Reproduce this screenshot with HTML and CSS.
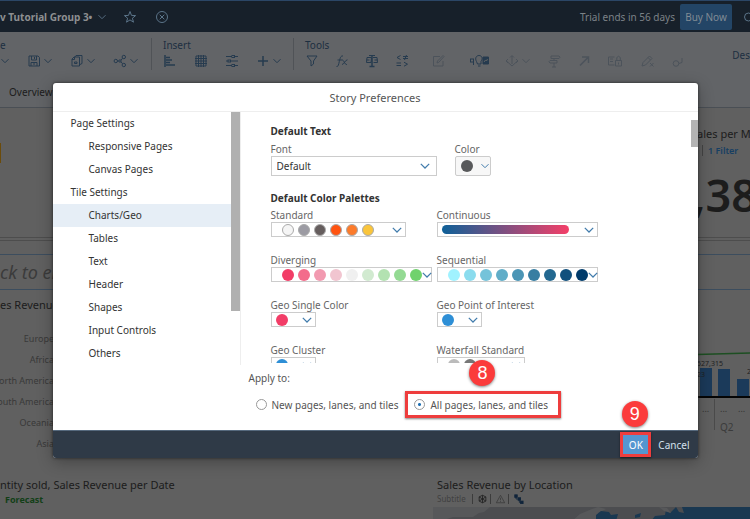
FILE: index.html
```html
<!DOCTYPE html>
<html lang="en">
<head>
<meta charset="utf-8">
<title>Story Preferences</title>
<link rel="stylesheet" href="styles.css">
</head>
<body>
<svg class="defs" aria-hidden="true">
  <symbol id="caret" viewBox="0 0 10 10"><path d="M1.500 3.200 5 6.700 8.500 3.200"/></symbol>
</svg>
<div class="app">
  <header class="shell">
    <strong class="story-name">v Tutorial Group 3•</strong>
    <svg class="caret" viewBox="0 0 10 10"><use href="#caret"/></svg>
    <svg class="icon star" viewBox="0 0 14 14"><path d="M7 1.500 8.500 5.400 12.600 5.600 9.400 8.200 10.500 12.200 7 9.900 3.500 12.200 4.600 8.200 1.400 5.600 5.500 5.400Z"/></svg>
    <svg class="icon" viewBox="0 0 14 14"><circle cx="7" cy="7" r="5.500"/><path d="M4.700 4.700 9.300 9.300M9.300 4.700 4.700 9.300"/></svg>
    <span class="trial">Trial ends in 56 days</span>
    <button class="buy">Buy Now</button>
    <svg class="search" viewBox="0 0 7 14"><circle cx="5.500" cy="7" r="4"/></svg>
  </header>

  <div class="toolbar">
    <section class="group">
      <h2>e</h2>
      <div class="tools">
        <svg class="caret" viewBox="0 0 10 10"><use href="#caret"/></svg>
        <span class="tool">
          <svg class="icon" viewBox="0 0 14 14"><path d="M2 2h9l1.500 1.500V12H2ZM4.500 2v4h5V2M4 12V8.500h6V12M7.500 3v2M6 10h2"/></svg>
          <svg class="caret" viewBox="0 0 10 10"><use href="#caret"/></svg>
        </span>
        <span class="tool">
          <svg class="icon" viewBox="0 0 14 14"><path d="M4.500 3.500 6 1.500h6v8l-2 1M2 5l2-2h5.500v9H2ZM2 5.500h2.500V3M4.500 9.500V8h2.500v1.500Z"/></svg>
          <svg class="caret" viewBox="0 0 10 10"><use href="#caret"/></svg>
        </span>
        <span class="tool">
          <svg class="icon" viewBox="0 0 14 14"><circle cx="2.800" cy="7" r="1.700"/><circle cx="7" cy="7" r="1.200"/><circle cx="10.800" cy="3" r="1.700"/><circle cx="10.800" cy="11" r="1.700"/><path d="M4.500 7h1.300M8 6.200l1.500-1.900M8 7.800l1.500 1.900"/></svg>
          <svg class="caret" viewBox="0 0 10 10"><use href="#caret"/></svg>
        </span>
      </div>
    </section>
    <section class="group">
      <h2>Insert</h2>
      <div class="tools">
        <svg class="icon solid" viewBox="0 0 14 14"><path d="M2 1v12M3 3.500h4M3 6h6M3 8.500h4M3 11h9"/></svg>
        <svg class="icon" viewBox="0 0 14 14"><path d="M2 2h10v10H2ZM1 4.500h12M1 7h12M1 9.500h12M4.500 1v12M7 1v12M9.500 1v12"/></svg>
        <svg class="icon" viewBox="0 0 14 14"><path d="M1 2.500h6M10 2.500h3M1 7h2M6 7h7M1 11.500h6M10 11.500h3"/><rect x="7" y="1.500" width="2.500" height="2"/><rect x="3" y="6" width="2.500" height="2"/><rect x="7" y="10.500" width="2.500" height="2"/></svg>
        <span class="tool">
          <svg class="icon solid" viewBox="0 0 14 14"><path d="M7 2v10M2 7h10"/></svg>
          <svg class="caret" viewBox="0 0 10 10"><use href="#caret"/></svg>
        </span>
      </div>
    </section>
    <section class="group grow">
      <h2>Tools</h2>
      <div class="tools compact">
        <svg class="icon" viewBox="0 0 14 14"><path d="M2 2h10L8.500 7v3L6 12V7Z"/></svg>
        <svg class="icon" viewBox="0 0 14 14"><path d="M1.500 12.500c2 .3 2-2 2.800-5S5.500 1.500 8 2M2.500 6h4.500M7 6c2-.5 2.500 5 5 4.500M12.500 5.800C10.500 5.500 9 10.500 7 10.500"/></svg>
        <svg class="icon" viewBox="0 0 14 14"><path class="bold" d="M7 1v11M4.500 12.500h5"/><path d="M2 3.500h4.500L6 8.500H1.500ZM8 3.500h4l.5 5H8.500M4 1.500h6M1.500 6h3M9.500 6h3"/></svg>
        <svg class="icon" viewBox="0 0 14 14"><path d="M5.500 1.500 2 3.500 5.500 5.500M8 2.500h5M8 4.500h5M11.500 1 9.500 6M1.500 9h4.500M1.500 11.500h4.500M9 8.200l3.500 2L9 12.200"/></svg>
        <svg class="icon roomy faint" viewBox="0 0 28 14"><path d="M15 2.500H8.500v9.500H18V7M12 9l.5-2L18 1.500 19 2.500 13.800 8.300Z"/></svg>
        <svg class="icon wide" viewBox="0 0 20 14"><path d="M7.500 7.500C5.500 4 7.500 1.500 10 1.500S14.500 4 12 7.500V10H8.500ZM9 12h2.500"/><rect x="1.500" y="5" width="3" height="3"/><path d="M4.500 8v3"/><path class="fill" d="M14 3h5.500v7H14Z"/><path class="cut" d="M15 8l1.500-2 1 1 1-2"/></svg>
        <span class="tool faint">
          <svg class="icon" viewBox="0 0 14 14"><path d="M5 3.500 7 1.500 9 3.500M7 2v8M3 5 1 7l2 2M11 5l2 2-2 2M1.500 7 7 12 12.500 7"/></svg>
          <svg class="caret" viewBox="0 0 10 10"><use href="#caret"/></svg>
        </span>
        <svg class="icon faint" viewBox="0 0 14 14"><path d="M4 2h8l1 1.200L12 4.500H4ZM10 6.500H3L2 7.700 3 9h7ZM7 4.500v2M7 9v4M5 13h4"/></svg>
        <svg class="icon faint solid" viewBox="0 0 14 14"><path d="M3 11.500 11 3.500M5 3h6.500v6"/></svg>
        <svg class="icon mid faint" viewBox="0 0 16 14"><path d="M7.500 3H1.500v8h6M3 5h3M3 7.500h3M8.500 6.500h6V12h-6ZM9.800 6.500V3.500q1.800-2.500 3.500 0v3M11.500 8.500v2"/></svg>
        <svg class="icon mid faint" viewBox="0 0 16 14"><path d="M3 12l1-3.500L10.500 2l2.500 2.500L6.500 11ZM9 3.500 11.500 6M11 9l3.500 3.500M14.500 9 11 12.500"/></svg>
        <svg class="icon faint" viewBox="0 0 14 14"><circle cx="5" cy="9.500" r="2.800"/><path d="M7.800 9.500 11 8.500V4"/></svg>
      </div>
    </section>
    <span class="mode">Des</span>
  </div>

  <nav class="tabs"><a href="#overview">Overview</a></nav>

  <main>
    <section class="row kpis">
      <i class="marker"></i>
      <article class="kpi">
        <h3>Sales per M</h3>
        <p class="filter"><a href="#filter">1 Filter</a></p>
        <p class="value">,38</p>
      </article>
    </section>
    <section class="row note">
      <input type="text" aria-label="Text" placeholder="ck to enter text">
    </section>
    <section class="row charts">
      <article class="regions">
        <h3>es Revenue</h3>
        <ul>
          <li>Europe</li><li>Africa</li><li>North America</li><li>South America</li><li>Oceania</li><li>Asia</li>
        </ul>
      </article>
      <svg class="forecast" viewBox="0 0 53 110">
        <path class="target" d="M0 13.500 53 12"/>
        <g class="bars"><rect x="3" y="27" width="12" height="28"/><rect x="21" y="28" width="12" height="27"/><rect x="40" y="38" width="12" height="17"/></g>
        <path class="base" d="M0 56h53"/><path class="split" d="M17.500 58v31"/>
        <text x="0" y="25">527,315</text><text x="0" y="36">23</text><text x="50" y="33">2</text>
        <text class="muted" x="5" y="71">...</text><text class="muted" x="23" y="71">...</text><text class="muted" x="41" y="71">...</text>
        <text class="quarter" x="23" y="90">Q2</text>
      </svg>
    </section>
    <section class="row lower">
      <article>
        <h3>ntity sold, Sales Revenue per Date</h3>
        <p class="legend">Forecast</p>
      </article>
      <article class="location">
        <h3>Sales Revenue by Location</h3>
        <p class="meta"><span>Subtitle</span>
          <svg class="mini" viewBox="0 0 12 12"><path d="M6 1.500 10 3.500v5L6 10.500 2 8.500v-5ZM2 3.500l8 5M10 3.500l-8 5M6 1.500v9"/></svg>
          <svg class="mini soft" viewBox="0 0 12 12"><path d="M6 1.500 11 10.500H1ZM6 4.500v3M6 8.500v1"/></svg>
          <svg class="mini links" viewBox="0 0 12 12"><path d="M3 3v3h4v4h3"/><rect x="1.500" y="1" width="3" height="3"/><rect x="5.500" y="4.500" width="3" height="3"/><rect x="8.500" y="8.500" width="3" height="3"/></svg>
        </p>
        <svg class="map" viewBox="0 0 317 14" preserveAspectRatio="none"><path class="land" d="M0 0h317v14H0Z"/><path class="ice" d="M0 0h57l-6 5-5 1-6 4H20L8 14H0ZM139 14l8-7 12-5 6-2 8 2-8 4 1 8Z"/><path class="sea" d="M163 14v-6l5-4 8 1 2 3 7-1-2 7ZM202 8l6-2-1 4-5 1ZM218 14l4-5 10-1 1-6 4 4 6-6 3 5 5 1-2-6h68v14Z"/><path class="ice" d="M226 0l8 1 4 5-7-2Z"/></svg>
      </article>
    </section>
  </main>
</div>

<div class="overlay">
  <form class="dialog" role="dialog" aria-labelledby="dialog-title">
    <h1 id="dialog-title">Story Preferences</h1>
    <div class="body">
      <nav class="side" aria-label="Settings">
        <ul>
          <li class="top">Page Settings</li>
          <li><a href="#responsive">Responsive Pages</a></li>
          <li><a href="#canvas">Canvas Pages</a></li>
          <li class="top">Tile Settings</li>
          <li class="current"><a href="#charts" aria-current="page">Charts/Geo</a></li>
          <li><a href="#tables">Tables</a></li>
          <li><a href="#text">Text</a></li>
          <li><a href="#header">Header</a></li>
          <li><a href="#shapes">Shapes</a></li>
          <li><a href="#inputs">Input Controls</a></li>
          <li><a href="#others">Others</a></li>
        </ul>
        <i class="side-thumb"></i>
      </nav>
      <div class="pane">
        <div class="fields">
          <h2>Default Text</h2>
          <div class="text-row">
            <div class="field">
              <label for="font">Font</label>
              <span class="select"><select id="font"><option>Default</option></select><svg class="caret" viewBox="0 0 10 10"><use href="#caret"/></svg></span>
            </div>
            <div class="field">
              <label for="color">Color</label>
              <button type="button" id="color" class="swatch"><i class="dot c-text"></i><svg class="caret" viewBox="0 0 10 10"><use href="#caret"/></svg></button>
            </div>
          </div>
          <h2>Default Color Palettes</h2>
          <div class="palettes">
            <div class="field">
              <label for="standard">Standard</label>
              <button type="button" id="standard" class="palette medium ringed"><i class="dot s1"></i><i class="dot s2"></i><i class="dot s3"></i><i class="dot s4"></i><i class="dot s5"></i><i class="dot s6"></i><svg class="caret" viewBox="0 0 10 10"><use href="#caret"/></svg></button>
            </div>
            <div class="field">
              <label for="continuous">Continuous</label>
              <button type="button" id="continuous" class="palette long tight"><i class="ramp"></i><svg class="caret inset" viewBox="0 0 10 10"><use href="#caret"/></svg></button>
            </div>
            <div class="field">
              <label for="diverging">Diverging</label>
              <button type="button" id="diverging" class="palette long"><i class="dot d1"></i><i class="dot d2"></i><i class="dot d3"></i><i class="dot d4"></i><i class="dot d5"></i><i class="dot d6"></i><i class="dot d7"></i><i class="dot d8"></i><i class="dot d9"></i><svg class="caret" viewBox="0 0 10 10"><use href="#caret"/></svg></button>
            </div>
            <div class="field">
              <label for="sequential">Sequential</label>
              <button type="button" id="sequential" class="palette long"><i class="dot q1"></i><i class="dot q2"></i><i class="dot q3"></i><i class="dot q4"></i><i class="dot q5"></i><i class="dot q6"></i><i class="dot q7"></i><i class="dot q8"></i><i class="dot q9"></i><svg class="caret" viewBox="0 0 10 10"><use href="#caret"/></svg></button>
            </div>
            <div class="field">
              <label for="geo-color">Geo Single Color</label>
              <button type="button" id="geo-color" class="palette short tight"><i class="dot d1"></i><svg class="caret" viewBox="0 0 10 10"><use href="#caret"/></svg></button>
            </div>
            <div class="field">
              <label for="geo-poi">Geo Point of Interest</label>
              <button type="button" id="geo-poi" class="palette short tight"><i class="dot geo"></i><svg class="caret" viewBox="0 0 10 10"><use href="#caret"/></svg></button>
            </div>
            <div class="field">
              <label for="geo-cluster">Geo Cluster</label>
              <button type="button" id="geo-cluster" class="palette short tight"><i class="dot geo"></i><svg class="caret" viewBox="0 0 10 10"><use href="#caret"/></svg></button>
            </div>
            <div class="field">
              <label for="waterfall">Waterfall Standard</label>
              <button type="button" id="waterfall" class="palette water"><i class="dot w1"></i><i class="dot w2"></i><i class="dot w3"></i><svg class="caret" viewBox="0 0 10 10"><use href="#caret"/></svg></button>
            </div>
          </div>
        </div>
        <i class="pane-thumb"></i>
      </div>
    </div>
    <fieldset class="apply">
      <legend>Apply to:</legend>
      <div class="choices">
        <label><input type="radio" name="scope">New pages, lanes, and tiles</label>
        <span class="mark wide-mark"><label><input type="radio" name="scope" checked>All pages, lanes, and tiles</label><b class="step">8</b></span>
      </div>
    </fieldset>
    <footer>
      <span class="mark"><button type="button" class="ok">OK</button><b class="step">9</b></span>
      <button type="button" class="cancel">Cancel</button>
    </footer>
  </form>
</div>
</body>
</html>
```
FILE: styles.css
```css
* { box-sizing: border-box; }
body, h1, h2, h3, p, ul, fieldset { margin: 0; padding: 0; }
body {
  height: 100vh;
  overflow: hidden;
  position: relative;
  background: #606060;
  color: #1c1c1c;
  font: 10px/14px "Noto Sans", "Open Sans", sans-serif;
}
ul { list-style: none; }
a { color: inherit; text-decoration: none; }
button, input, select { font: inherit; color: inherit; margin: 0; }
h3 { font-size: 11px; line-height: 16px; font-weight: 400; white-space: nowrap; }
svg { flex: none; fill: none; stroke: currentColor; }
.defs { display: none; }
.icon { width: 14px; height: 14px; }
.icon.mid { width: 16px; }
.icon.wide { width: 20px; }
.icon.roomy { width: 28px; }
.icon.solid, .icon .bold { stroke-width: 1.500; }
.icon .fill { fill: currentColor; }
.icon .cut { stroke: #606264; }
.caret { width: 10px; height: 10px; }

.shell {
  display: flex;
  align-items: center;
  height: 32px;
  border-top: 1px solid #2b4666;
  background: #17202a;
  color: #7c8287;
}
.story-name { font-weight: 700; color: #8d8f91; margin-right: 5px; white-space: nowrap; }
.shell .caret { color: #566d82; }
.shell .icon { margin-left: 18px; color: #5b7489; }
.shell .star { margin-left: 16px; }
.trial { margin-left: auto; white-space: nowrap; }
.buy {
  height: 26px;
  width: 52px;
  padding: 0;
  margin: 0 11px 0 5px;
  border: 0;
  border-radius: 2px;
  background: #234566;
  color: #808b95;
  white-space: nowrap;
}
.search { width: 7px; height: 14px; color: #5b7489; }

.toolbar {
  display: flex;
  height: 51px;
  padding-top: 6px;
  background: #626467;
  color: #1d2f41;
}
.toolbar svg { color: #263b4f; }
.group { margin-right: 12px; }
.group + .group { border-left: 1px solid #505357; padding-left: 11px; height: 32px; margin-right: 11px; }
.group h2 { font-size: 10px; line-height: 14px; font-weight: 400; }
.tools { display: flex; align-items: center; gap: 17px; height: 18px; }
.tools.compact { gap: 16px; }
.tool { display: flex; align-items: center; gap: 2px; }
.toolbar .faint, .toolbar .faint svg { color: #4c535b; }
.group.grow { flex: 1; margin-right: 0; }
.mode { align-self: flex-start; margin-top: 10px; }
.tabs { height: 25px; padding: 2px 9px; border-bottom: 1px solid #4a4f55; background: #626467; }

.row { display: flex; justify-content: space-between; }
.kpis { height: 130px; border-bottom: 1px solid #4d4d4d; }
.marker { width: 1px; height: 20px; margin-top: 35px; background: #6b4b0a; }
.kpi { width: 59px; margin-top: 18px; overflow: hidden; }
.filter { margin: 3px 0 0 11px; padding-left: 5px; border-left: 1px solid #444; line-height: 11px; font-size: 9px; font-weight: 600; color: #173f63; white-space: nowrap; }
.value { margin-top: 12px; padding-left: 2px; font-size: 45px; line-height: 54px; font-weight: 600; }
.note { padding: 13px 0 9px; margin-top: 2px; border-top: 1px solid #4d4d4d; }
.note input {
  flex: 1;
  min-width: 0;
  height: 36px;
  padding: 0;
  border: solid #3c4d5e;
  border-width: 1px 0;
  background: none;
  font-size: 18px;
  font-style: italic;
}
.note input::placeholder { color: #3b3b3b; }
.charts { height: 180px; margin-top: -2px; }
.regions { width: 54px; }
.regions li { display: flex; justify-content: flex-end; height: 21px; line-height: 21px; font-size: 9px; color: #393939; white-space: nowrap; }
.regions ul { margin-top: 15px; }
.forecast { width: 53px; height: 110px; margin-top: 44px; }
.forecast text { stroke: none; fill: #1f1f1f; font-size: 7px; }
.forecast .muted { fill: #333; font-size: 9px; }
.forecast .quarter { fill: #3b3b3b; font-size: 10px; }
.bars { fill: #1b3a5a; stroke: none; }
.target { stroke: #1d4f22; stroke-width: 1.500; }
.base { stroke: #050505; stroke-width: 2; }
.split { stroke: #4b4b4b; }
.legend { padding-left: 5px; font-size: 9px; font-weight: 700; color: #123f17; }
.location { width: 317px; }
.location h3, .meta { padding-left: 4px; }
.meta { display: flex; align-items: center; height: 12px; font-size: 8px; color: #414141; }
.meta span { margin-right: 6px; }
.mini { width: 18px; height: 10px; border-left: 1px solid #3c3c3c; padding-left: 2px; color: #1e1e1e; }
.mini.soft { color: #3c3c3c; }
.mini.links { color: #10243b; }
.mini.links rect { fill: currentColor; }
.map { display: block; width: 100%; height: 14px; margin-top: 2px; stroke: none; }
.land { fill: #4c4d50; }
.ice { fill: #57585a; }
.sea { fill: #1a3851; }

.overlay { position: absolute; inset: 0; display: flex; justify-content: center; align-items: flex-start; padding-top: 83px; }
.dialog {
  width: 86%;
  border-radius: 3px;
  background: #fff;
  color: #333;
  box-shadow: 0 0 3px #222, 0 4px 16px rgba(0, 0, 0, .3);
}
.dialog h1 { height: 29px; border-bottom: 1px solid #eee; font-size: 11px; line-height: 29px; font-weight: 400; text-align: center; color: #555; }
.body { display: flex; height: 253px; }
.side { display: flex; width: 188px; border-right: 1px solid #eee; }
.side ul { flex: 1; }
.side li { height: 23px; line-height: 23px; padding-left: 36px; }
.side .top { padding-left: 18px; }
.side .current { background: #e6eef6; }
.side-thumb { width: 9px; height: 199px; background: #b0b0b0; }
.pane { display: flex; flex: 1; height: 251px; overflow: hidden; }
.fields { flex: 1; padding: 12px 0 0 30px; }
.pane-thumb { width: 7px; height: 27px; margin-top: 8px; background: #b3b3b3; }
.fields h2 { font-size: 10px; line-height: 14px; font-weight: 700; }
.text-row { display: flex; gap: 18px; margin: 4px 0 15px; }
.field label { display: block; line-height: 14px; color: #666; white-space: nowrap; }
.select { display: flex; position: relative; width: 166px; }
select { width: 100%; height: 20px; padding: 0 5px; border: 1px solid #ccc; border-radius: 0; background: #fff; appearance: none; }
.select .caret { position: absolute; right: 6px; top: 4px; }
.dialog .caret { width: 12px; height: 12px; color: #427cac; }
.swatch { display: flex; align-items: center; gap: 7px; width: 36px; height: 20px; padding: 0 5px; border: 1px solid #ccc; border-radius: 2px; background: #f7f7f7; }
.dialog .swatch .caret { width: 10px; height: 10px; }
.dot { flex: none; width: 12px; height: 12px; border-radius: 50%; }
.palettes { display: grid; grid-template-columns: 166px 1fr; row-gap: 16px; margin-top: 3px; }
.palette { display: flex; align-items: center; gap: 4px; height: 15px; padding: 0 2px 0 10px; border: 1px solid #ccc; background: #fff; }
.palette .caret { margin-left: auto; }
.palette.tight { padding-left: 4px; }
.short { width: 45px; }
.medium { width: 135px; }
.long { width: 161px; }
.water { width: 88px; }
.long .caret { margin-left: -5px; }
.long .inset { margin-left: auto; }
.ringed .dot { border: 1px solid #aaa; }
.ramp { width: 127px; height: 9px; border-radius: 5px; background: linear-gradient(90deg, #0e6098, #f43f68); }
.c-text { background: #58595b; }
.s1 { background: #f5f5f5; } .s2 { background: #9c9ba3; } .s3 { background: #655d5d; }
.s4 { background: #ff5310; } .s5 { background: #fc7b2b; } .s6 { background: #fac53b; }
.d1 { background: #f23d67; } .d2 { background: #f36c8b; } .d3 { background: #f29ab0; }
.d4 { background: #f1c5d0; } .d5 { background: #f0f0f0; } .d6 { background: #d1ead0; }
.d7 { background: #b3e2b1; } .d8 { background: #94da93; } .d9 { background: #70d26d; }
.q1 { background: #a0f2ff; } .q2 { background: #8bdcee; } .q3 { background: #75c3da; }
.q4 { background: #60adc8; } .q5 { background: #4b95b5; } .q6 { background: #387ea2; }
.q7 { background: #236890; } .q8 { background: #11507d; } .q9 { background: #003b6b; }
.geo { background: #2e8fd6; }
.w1 { background: #bbb; } .w2 { background: #777; } .w3 { background: #fff; }

.apply { border: 0; height: 65px; padding: 6px 9px 0 196px; color: #555; }
.apply legend { padding: 6px 0 0; line-height: 14px; }
.choices { display: flex; align-items: center; margin-left: 7px; }
.choices label { display: flex; align-items: center; gap: 5px; white-space: nowrap; }
.choices input { appearance: none; width: 11px; height: 11px; border: 1px solid #999; border-radius: 50%; background: #fff; }
.choices input:checked { background: radial-gradient(circle, #1f6fb2 0 1px, #fff 2px); }
.mark { position: relative; display: flex; border: 3px solid #ee3d3d; box-shadow: 0 1px 2px rgba(0, 0, 0, .5); }
.wide-mark { width: 156px; height: 27px; margin-left: 7px; padding-left: 6px; }
.step {
  position: absolute;
  left: 50%;
  bottom: 100%;
  width: 26px;
  height: 26px;
  margin: 0 0 8px -14px;
  border-radius: 50%;
  background: #fb3b3b;
  color: #fff;
  font: 18px/26px "Liberation Sans", sans-serif;
  text-align: center;
  box-shadow: 0 1px 3px rgba(0, 0, 0, .5);
}
footer { display: flex; justify-content: flex-end; align-items: center; height: 28px; padding-right: 8px; border-top: 1px solid #56697d; border-radius: 0 0 3px 3px; background: #2f3a47; }
.ok { width: 25px; height: 19px; padding: 0; border: 0; background: #5496d0; color: #fff; }
.cancel { padding: 0 0 0 7px; border: 0; background: none; color: #d3e0ec; }
```
